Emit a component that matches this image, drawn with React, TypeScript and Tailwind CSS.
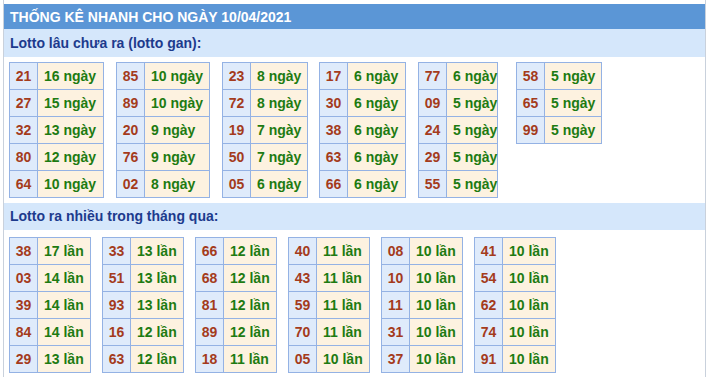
import React from "react";

type Cell = [string, string];

const gan: { w: string; rows: Cell[] }[] = [
  { w: "w-[66px]", rows: [["21", "16 ngày"], ["27", "15 ngày"], ["32", "13 ngày"], ["80", "12 ngày"], ["64", "10 ngày"]] },
  { w: "w-[65px]", rows: [["85", "10 ngày"], ["89", "10 ngày"], ["20", "9 ngày"], ["76", "9 ngày"], ["02", "8 ngày"]] },
  { w: "w-[57px]", rows: [["23", "8 ngày"], ["72", "8 ngày"], ["19", "7 ngày"], ["50", "7 ngày"], ["05", "6 ngày"]] },
  { w: "w-[58px]", rows: [["17", "6 ngày"], ["30", "6 ngày"], ["38", "6 ngày"], ["63", "6 ngày"], ["66", "6 ngày"]] },
  { w: "w-[51px]", rows: [["77", "6 ngày"], ["09", "5 ngày"], ["24", "5 ngày"], ["29", "5 ngày"], ["55", "5 ngày"]] },
  { w: "w-[57px]", rows: [["58", "5 ngày"], ["65", "5 ngày"], ["99", "5 ngày"]] },
];

const ganMargins = ["ml-0", "ml-[12px]", "ml-[12px]", "ml-[11px]", "ml-[12px]", "ml-[18px]"];

const nhieu: Cell[][] = [
  [["38", "17 lần"], ["03", "14 lần"], ["39", "14 lần"], ["84", "14 lần"], ["29", "13 lần"]],
  [["33", "13 lần"], ["51", "13 lần"], ["93", "13 lần"], ["16", "12 lần"], ["63", "12 lần"]],
  [["66", "12 lần"], ["68", "12 lần"], ["81", "12 lần"], ["89", "12 lần"], ["18", "11 lần"]],
  [["40", "11 lần"], ["43", "11 lần"], ["59", "11 lần"], ["70", "11 lần"], ["05", "10 lần"]],
  [["08", "10 lần"], ["10", "10 lần"], ["11", "10 lần"], ["31", "10 lần"], ["37", "10 lần"]],
  [["41", "10 lần"], ["54", "10 lần"], ["62", "10 lần"], ["74", "10 lần"], ["91", "10 lần"]],
];

function LTable({ rows, w, className }: { rows: Cell[]; w: string; className: string }) {
  return (
    <div className={`flex flex-col self-start border-t border-l border-[#94b2e4] ${className}`}>
      {rows.map(([n, v], i) => (
        <div key={i} className="flex h-[27px]">
          <div className="w-[28px] flex items-center justify-center bg-[#dfebfb] border-r border-b border-[#94b2e4] text-[#a43b1c]">
            {n}
          </div>
          <div className={`${w} flex items-center pl-[6px] bg-[#fdf2e0] border-r border-b border-[#94b2e4] text-[#1d7b12] whitespace-nowrap`}>
            {v}
          </div>
        </div>
      ))}
    </div>
  );
}

export default function App() {
  return (
    <div
      className="w-[710px] h-[377px] overflow-hidden bg-white text-[14px] font-bold"
      style={{ fontFamily: '"Liberation Sans", Arial, sans-serif' }}
    >
      <div className="ml-[3px] w-[703px] h-[400px] pt-[4px] border-l border-r border-[#c9d1dc] flex flex-col">
        <div className="h-[25px] shrink-0 bg-[#5b96d6] text-white flex items-center pl-[6px] leading-none">
          THỐNG KÊ NHANH CHO NGÀY 10/04/2021
        </div>
        <div className="h-[28px] shrink-0 bg-[#d5e7fb] text-[#1d3b8d] flex items-center pl-[6px]">
          Lotto lâu chưa ra (lotto gan):
        </div>
        <div className="flex shrink-0 pl-[5px] pt-[5px] h-[146px]">
          {gan.map((t, i) => (
            <LTable key={i} rows={t.rows} w={t.w} className={ganMargins[i]} />
          ))}
        </div>
        <div className="h-[27px] shrink-0 bg-[#d5e7fb] text-[#1d3b8d] flex items-center pl-[6px]">
          Lotto ra nhiều trong tháng qua:
        </div>
        <div className="flex shrink-0 pl-[5px] pt-[7px] gap-[11px]">
          {nhieu.map((rows, i) => (
            <LTable key={i} rows={rows} w="w-[53px]" className="" />
          ))}
        </div>
      </div>
    </div>
  );
}
